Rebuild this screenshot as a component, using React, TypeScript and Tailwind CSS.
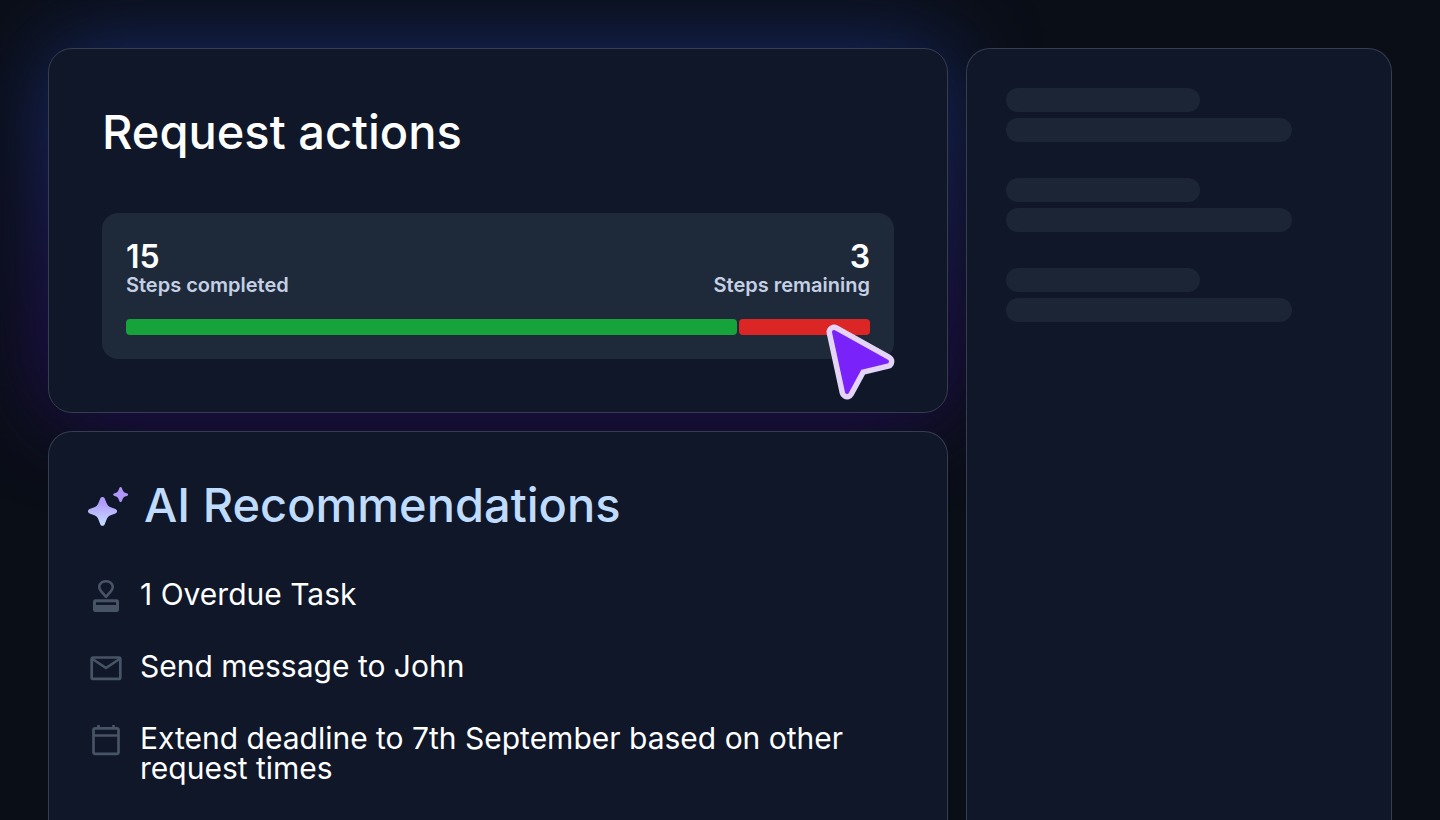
import type { ReactNode } from 'react';

const steps = { completed: 15, remaining: 3 };

function SparkleIcon() {
  return (
    <svg viewBox="0 1 40 48" className="h-12 w-10 shrink-0" aria-hidden="true">
      <defs>
        <linearGradient id="sparkle" x1="0" y1="16" x2="0" y2="46" gradientUnits="userSpaceOnUse">
          <stop offset="0.2" stopColor="#b09afa" />
          <stop offset="1" stopColor="#c6e0ff" />
        </linearGradient>
      </defs>
      <path
        fill="url(#sparkle)"
        d="M12.3 18.6C13 16.6 16 16.6 16.7 18.6L19 24.1Q19.9 26.3 22 27.1L27.4 29.1C29.6 30 29.6 32.6 27.4 33.5L22 35.6Q19.9 36.5 19 38.6L16.7 44.2C16 46.2 13 46.2 12.3 44.2L10 38.6Q9.1 36.5 7 35.6L1.6 33.5C-0.6 32.6 -0.6 30 1.6 29.1L7 27.1Q9.1 26.3 10 24.1Z"
      />
      <path
        fill="#ae97f9"
        d="M31.4 7.9C31.8 6.8 33.4 6.8 33.8 7.9L35 10.8Q35.5 11.9 36.5 12.4L39.3 13.5C40.3 14 40.3 15.2 39.3 15.7L36.5 16.8Q35.5 17.3 35 18.3L33.8 21.3C33.4 22.4 31.8 22.4 31.4 21.3L30.2 18.3Q29.7 17.3 28.7 16.8L25.9 15.7C24.9 15.2 24.9 14 25.9 13.5L28.7 12.4Q29.7 11.9 30.2 10.8Z"
      />
    </svg>
  );
}

function RowIcon({ children }: { children: ReactNode }) {
  return (
    <svg
      viewBox="0 0 32 36"
      className="h-9 w-8 shrink-0 text-[#475466]"
      fill="none"
      stroke="currentColor"
      strokeWidth="3"
      strokeLinejoin="round"
      aria-hidden="true"
    >
      {children}
    </svg>
  );
}

const recommendations = [
  {
    text: '1 Overdue Task',
    icon: (
      <RowIcon>
        <path strokeWidth="2.6" d="M16 17.8L11.2 12.4C7 7.4 10.4 2.3 16 2.3S25 7.4 20.8 12.4Z" />
        <path
          fill="currentColor"
          stroke="none"
          fillRule="evenodd"
          d="M5.5 20.3H26.5Q29 20.3 29 22.8V30.5Q29 33 26.5 33H5.5Q3 33 3 30.5V22.8Q3 20.3 5.5 20.3ZM6 23.2V26H26V23.2Z"
        />
      </RowIcon>
    ),
  },
  {
    text: 'Send message to John',
    icon: (
      <RowIcon>
        <rect x="1.7" y="6.5" width="28.6" height="21.4" rx="1.5" strokeWidth="2.7" />
        <path d="M2.5 8L16 17L29.5 8" strokeWidth="2.7" />
      </RowIcon>
    ),
  },
  {
    text: 'Extend deadline to 7th September based on other request times',
    icon: (
      <RowIcon>
        <rect x="3.5" y="5.3" width="25" height="25.6" rx="1.8" strokeWidth="2.7" />
        <path d="M3.5 12.5H28.5M8.5 2V6M23.5 2V6" strokeWidth="2.7" />
      </RowIcon>
    ),
  },
];

function Cursor() {
  return (
    <svg viewBox="0 0 76 80" className="absolute -right-1 -bottom-11 h-20 w-19" strokeLinejoin="round" aria-hidden="true">
      <path d="M12 9L65 38.5L38 45L25 69Z" fill="#e4d4f8" stroke="#e4d4f8" strokeWidth="15" />
      <path d="M12 9L65 38.5L38 45L25 69Z" fill="#7a22fa" stroke="#7a22fa" strokeWidth="4" />
    </svg>
  );
}

export default function App() {
  return (
    <main className="relative isolate grid min-h-screen grid-cols-[900fr_426fr] gap-[18px] overflow-hidden bg-[#0a0e17] px-12 pt-12 font-['Inter',sans-serif] text-white">
      <div className="flex min-w-0 flex-col gap-[18px]">
        {/* Request actions */}
        <section className="relative">
          <div className="absolute inset-0 -z-10 rounded-3xl bg-linear-to-b from-[#172c6c] from-10% to-[#220d5a] to-80% blur-[44px]" />
          <div className="rounded-3xl border border-[#353d4e] bg-[#0f1728] p-[53px]">
            <h1 className="text-[47px] leading-[60px] font-medium">Request actions</h1>

            <div className="relative mt-[51px] rounded-2xl bg-[#1e293a] p-6">
              <div className="flex justify-between">
                <div>
                  <p className="text-[32px] leading-10 font-semibold">{steps.completed}</p>
                  <p className="text-[20px] leading-4 font-semibold text-[#c5d0e4]">Steps completed</p>
                </div>
                <div className="text-right">
                  <p className="text-[32px] leading-10 font-semibold">{steps.remaining}</p>
                  <p className="text-[20px] leading-4 font-semibold text-[#c5d0e4]">Steps remaining</p>
                </div>
              </div>
              <div className="mt-[26px] grid h-4 grid-cols-[14fr_3fr] gap-0.5">
                <div className="rounded bg-[#17a33b]" />
                <div className="rounded bg-[#dc2626]" />
              </div>
              <Cursor />
            </div>
          </div>
        </section>

        {/* AI recommendations */}
        <section className="grow rounded-t-3xl border border-b-0 border-[#353d4e] bg-[#0f1728] px-[39px] pt-12">
          <div className="flex items-center gap-4">
            <SparkleIcon />
            <h2 className="text-[47px] leading-[50px] font-medium text-[#bfdbfe]">AI Recommendations</h2>
          </div>
          <ul className="mt-[49px] flex flex-col gap-9 pl-0.5">
            {recommendations.map((item) => (
              <li key={item.text} className="flex items-start gap-[18px]">
                {item.icon}
                <span className="max-w-[740px] text-[30px] leading-[30px]">{item.text}</span>
              </li>
            ))}
          </ul>
        </section>
      </div>

      {/* Side panel placeholder */}
      <aside className="flex flex-col gap-9 rounded-t-3xl border border-b-0 border-[#353d4e] bg-[#0f1728] p-[39px]" aria-hidden="true">
        {[1, 2, 3].map((i) => (
          <div key={i} className="flex flex-col gap-1.5">
            <div className="h-6 w-[194px] max-w-full rounded-full bg-[#1c2535]" />
            <div className="h-6 w-[286px] max-w-full rounded-full bg-[#1c2535]" />
          </div>
        ))}
      </aside>
    </main>
  );
}
